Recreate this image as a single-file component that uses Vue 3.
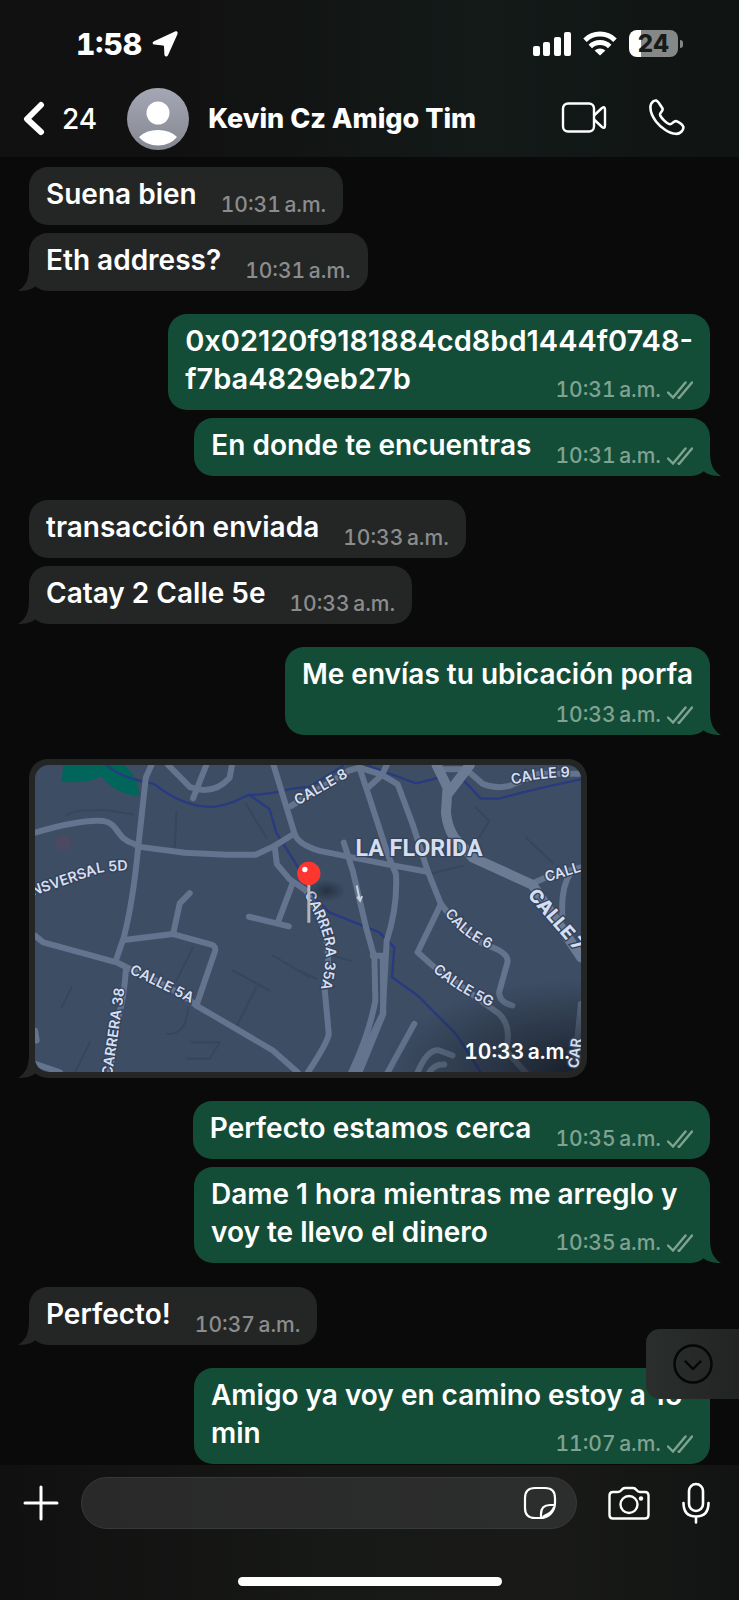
<template>
  <div class="phone">
    <header class="top">
      <div class="status">
        <span class="clock">1:58</span>
        <svg class="arrow" width="26" height="26" viewBox="0 0 26 26" fill="#fff">
          <path d="M23 .6 2 10.2C0 11.200 .3 13.400 2.300 13.600L11 14.400Q12 14.500 12 15.500L12.400 23.500C12.500 25.800 15 26.200 16 24.200L25.300 3.400C26.300 1.200 25 -.2 23 .6Z" />
        </svg>
        <svg class="signal" width="38" height="24" viewBox="0 0 38 24" fill="#fff">
          <rect x="0" y="14" width="7" height="10" rx="2" />
          <rect x="10" y="10" width="7" height="14" rx="2" />
          <rect x="21" y="5" width="7" height="19" rx="2" />
          <rect x="31" y="0" width="7" height="24" rx="2" />
        </svg>
        <svg class="wifi" width="34" height="25" viewBox="0 0 34 25" fill="none" stroke="#fff" stroke-width="5">
          <path d="M2 9.200A21.500 21.500 0 0 1 32 9.200" />
          <path d="M7.300 15.500A14 14 0 0 1 26.700 15.500" />
          <path d="M17 24.500 11.600 19.600A8 8 0 0 1 22.400 19.600Z" fill="#fff" stroke="none" />
        </svg>
        <span class="battery"><span class="level">24</span></span>
      </div>
      <div class="contact">
        <button class="back" aria-label="Atrás">
          <svg width="22" height="36" viewBox="0 0 22 36" fill="none" stroke="#fff" stroke-width="6" stroke-linecap="round" stroke-linejoin="round">
            <path d="M18 4 4 18 18 31" />
          </svg>
          <span>24</span>
        </button>
        <svg class="avatar" width="62" height="62" viewBox="0 0 62 62">
          <defs>
            <linearGradient id="avatarFill" x1="0" y1="0" x2="0" y2="1">
              <stop offset="0" stop-color="#a5a7b4" />
              <stop offset="1" stop-color="#858793" />
            </linearGradient>
          </defs>
          <circle cx="31" cy="31" r="31" fill="url(#avatarFill)" />
          <circle cx="31" cy="25" r="11.500" fill="#fff" />
          <path d="M12 49Q19 42 31 42T50 49Q43 57.500 31 57.500T12 49Z" fill="#fff" />
        </svg>
        <h1>Kevin Cz Amigo Tim</h1>
        <button class="video" aria-label="Videollamada">
          <svg width="46" height="34" viewBox="0 0 46 34" fill="none" stroke="#fff" stroke-width="2.400" stroke-linejoin="round">
            <rect x="2" y="1.500" width="31" height="28" rx="5" />
            <path d="M33 13.500 41 6Q44 4 44 7.500V23.500Q44 27 41 25L33 17.500" />
          </svg>
        </button>
        <button class="call" aria-label="Llamar">
          <svg width="36" height="40" viewBox="0 0 36 40" fill="none" stroke="#fff" stroke-width="2.600" stroke-linejoin="round">
            <path d="M1.500 7C2 3.500 5 .8 7.500 1.600 9.500 2.600 11.500 6.500 13.500 9.500 14.500 12 10.800 13.500 11 15.500 11.500 18.500 18 25 21 25.200 23.500 25.200 24.800 21.300 27.500 22.200 30 23.400 33.500 25.500 34.300 27.800 35 31 31 35.300 26.500 34.800 20.500 34.500 12 29 7 22.500 3 17 1 11.500 1.500 7Z" />
          </svg>
        </button>
      </div>
    </header>

    <main class="chat">
      <div
        v-for="msg in messages"
        :key="msg.id"
        class="bubble"
        :class="[msg.mine ? 'mine' : 'theirs', msg.layout, { first: msg.first, wide: msg.wide }]"
      >
        <template v-if="msg.layout === 'map'">
          <svg class="map-art" viewBox="105 72 1641 924" role="img" aria-label="La Florida">
            <defs>
              <path v-for="label in labels" :id="label.id" :key="label.id" :d="label.d" />
              <radialGradient id="shade" cx="1" cy="1" r="1">
                <stop offset="0" stop-color="#10151c" stop-opacity="0.850" />
                <stop offset="0.400" stop-color="#10151c" stop-opacity="0.450" />
                <stop offset="1" stop-color="#10151c" stop-opacity="0" />
              </radialGradient>
              <radialGradient id="pinShadow">
                <stop offset="0" stop-color="#1d2735" stop-opacity="0.700" />
                <stop offset="1" stop-color="#1d2735" stop-opacity="0" />
              </radialGradient>
            </defs>
            <rect x="105" y="72" width="1641" height="924" fill="#3d4d64" />
            <path d="M190 72H375L410 115 420 166Q345 160 305 105 260 130 185 122Z" fill="#00665c" />
            <circle cx="190" cy="305" r="24" fill="#5b4660" opacity=".5" />
            <path
              class="block"
              d="M200 225Q210 205 320 208L400 220M530 210 525 320M740 190 800 290M580 620 530 720M700 690 810 750M770 740 710 860M500 880Q560 885 565 800M575 905H660L630 955H560M820 645 930 710M215 740 185 800M270 905 225 996M1580 290 1660 365M1430 200 1470 240 1440 290M1290 400 1390 375M900 690 950 715M980 640 1055 660"
            />
            <path v-for="d in rivers" :key="d" class="river" :d="d" />
            <path v-for="d in roads" :key="d" class="road" :d="d" />
            <path v-for="d in avenues" :key="d" class="avenue" :d="d" />
            <path d="M1072 434 1081 478M1073 468 1082 480 1088 466" fill="none" stroke="#c9d2de" stroke-width="6" />
            <rect x="1146" y="716" width="600" height="280" fill="url(#shade)" />
            <text v-for="label in labels" :key="label.id" class="street" :class="{ big: label.big }">
              <textPath :href="'#' + label.id">{{ label.text }}</textPath>
            </text>
            <text class="area" x="1068" y="345">LA FLORIDA</text>
            <ellipse cx="982" cy="450" rx="56" ry="34" fill="url(#pinShadow)" />
            <path d="M928 430V546" stroke="#b5b5b5" stroke-width="9" />
            <circle cx="928" cy="398" r="35" fill="#ff3530" />
            <circle cx="916" cy="386" r="8" fill="#fff" />
          </svg>
          <span class="map-time">{{ msg.time }}</span>
        </template>
        <template v-else>
          <span class="text">{{ msg.text }}</span>
          <span class="meta">
            {{ msg.time }}
            <svg v-if="msg.mine" width="26" height="18" viewBox="0 0 26 18" fill="none" stroke="currentColor" stroke-width="2.400" stroke-linecap="round">
              <path d="M1 11.500 6 16.500 18.500 1.500M11.500 16.500 12 17 25 1.500" />
            </svg>
          </span>
        </template>
        <svg v-if="msg.last" class="tail" width="18" height="24" viewBox="0 0 18 24" fill="currentColor">
          <path d="M11 0C11 12 8 19 0 24 7 24 13 23 18 19V0Z" />
        </svg>
      </div>

      <button class="jump" aria-label="Ir al final">
        <svg width="40" height="40" viewBox="0 0 40 40" fill="none" stroke="#050606" stroke-width="2.400" stroke-linecap="round" stroke-linejoin="round">
          <circle cx="20" cy="20" r="18.500" />
          <path d="M12.500 17.500 20 25 27.500 17.500" />
        </svg>
      </button>
    </main>

    <footer class="bottom">
      <form class="composer" @submit.prevent>
        <button type="button" class="plus" aria-label="Adjuntar">
          <svg width="36" height="36" viewBox="0 0 36 36" stroke="#fff" stroke-width="3" stroke-linecap="round">
            <path d="M18 2V34M2 18H34" />
          </svg>
        </button>
        <div class="field">
          <input v-model="draft" type="text" aria-label="Mensaje" />
          <button type="button" aria-label="Stickers">
            <svg width="34" height="34" viewBox="0 0 34 34" fill="none" stroke="#fff" stroke-width="2.200" stroke-linejoin="round">
              <path d="M12 2H22Q32 2 32 12V17C32 26 25 32 17 32H12Q2 32 2 22V12Q2 2 12 2Z" />
              <path d="M18 32V28Q18 19 27 19H32M20 31Q21 30 25 28 30 25 31 21" />
            </svg>
          </button>
        </div>
        <button type="button" class="camera" aria-label="Cámara">
          <svg width="42" height="34" viewBox="0 0 42 34" fill="none" stroke="#fff" stroke-width="2.400" stroke-linejoin="round">
            <path d="M5 6H10Q12 6 13.500 4T17 2H25Q27 2 28.500 4T32 6H37Q40.500 6 40.500 9.500V29Q40.500 32.500 37 32.500H5Q1.500 32.500 1.500 29V9.500Q1.500 6 5 6Z" />
            <circle cx="21" cy="18.500" r="8.500" />
            <circle cx="33" cy="12.500" r="2.200" fill="#fff" stroke="none" />
          </svg>
        </button>
        <button type="button" class="mic" aria-label="Mensaje de voz">
          <svg width="28" height="42" viewBox="0 0 28 42" fill="none" stroke="#fff" stroke-width="2.600" stroke-linecap="round">
            <rect x="7" y="2" width="14" height="27" rx="7" />
            <path d="M1.500 21Q1.500 34.500 14 34.500T26.500 21M14 34.500V40.500" />
          </svg>
        </button>
      </form>
      <div class="home"></div>
    </footer>
  </div>
</template>


<script setup>
import { ref } from 'vue';

const draft = ref('');

// layout: where the time goes (beside the text, over its last line, below it)
const messages = [
  { id: 1, text: 'Suena bien', time: '10:31\u202fa.m.', layout: 'beside' },
  { id: 2, text: 'Eth address?', time: '10:31\u202fa.m.', layout: 'beside', last: true },
  { id: 3, mine: true, first: true, wide: true, text: '0x02120f9181884cd8bd1444f0748-\nf7ba4829eb27b', time: '10:31\u202fa.m.', layout: 'over' },
  { id: 4, mine: true, text: 'En donde te encuentras', time: '10:31\u202fa.m.', layout: 'beside', last: true },
  { id: 5, first: true, text: 'transacción enviada', time: '10:33\u202fa.m.', layout: 'beside' },
  { id: 6, text: 'Catay 2 Calle 5e', time: '10:33\u202fa.m.', layout: 'beside', last: true },
  { id: 7, mine: true, first: true, text: 'Me envías tu ubicación porfa', time: '10:33\u202fa.m.', layout: 'below', last: true },
  { id: 8, first: true, time: '10:33\u202fa.m.', layout: 'map', last: true },
  { id: 9, mine: true, first: true, text: 'Perfecto estamos cerca', time: '10:35\u202fa.m.', layout: 'beside' },
  { id: 10, mine: true, text: 'Dame 1 hora mientras me arreglo y voy te llevo el dinero', time: '10:35\u202fa.m.', layout: 'over', last: true },
  { id: 11, first: true, text: 'Perfecto!', time: '10:37\u202fa.m.', layout: 'beside', last: true },
  { id: 12, mine: true, first: true, text: 'Amigo ya voy en camino estoy a 15 min', time: '11:07\u202fa.m.', layout: 'over' },
];

const rivers = [
  'M320 72C360 110 420 118 465 130 520 175 580 198 640 198 700 192 720 170 750 162 830 162 850 142 930 138L1030 75',
  'M750 162 810 205 830 275 890 370 950 475 990 515 1140 575 1185 620 1178 710 1255 765 1370 880 1445 996',
  'M1100 72 1250 127 1330 108',
  'M1390 115 1445 173 1500 173Q1600 145 1746 115',
];

const roads = [
  'M105 275C190 250 260 236 310 240 360 250 345 290 400 308L420 318',
  'M455 72 438 110 415 320Q400 480 372 590L348 660',
  'M420 318 555 336 680 342H768L825 315 885 278',
  'M105 585 130 605 350 665 380 680Q530 745 590 795L820 930 895 996',
  'M378 690Q372 780 350 850L330 996',
  'M372 598 520 580 635 612Q652 618 645 635L590 795',
  'M520 580 540 488 570 457',
  'M748 528 868 557M835 545 880 425',
  'M825 315 832 370 870 415 920 450C970 540 1005 620 975 740L988 880Q985 905 925 996',
  'M505 72 570 138Q640 165 690 110L697 72M620 72 580 172',
  'M822 72 885 278Q895 310 960 330L1160 370 1280 392',
  'M875 195 1050 88 1080 80 1145 100 1195 130 1240 250 1285 390 1325 490',
  'M1080 80 1110 170 1165 340 1190 400Q1195 500 1162 600L1150 820 1065 996',
  'M1162 72 1148 102 1108 138',
  'M1033 305 1060 390 1100 560 1125 650 1128 780Q1110 880 1055 996',
  'M1120 645H1158M1150 650 1152 820 1080 996',
  'M1330 85H1400L1450 128Q1490 145 1530 135L1620 98H1746',
  'M1600 428 1640 410 1746 380M1715 395Q1685 440 1690 525',
  'M1325 490 1255 635 1300 675 1500 820Q1540 860 1520 930L1580 996',
  'M1325 490Q1410 600 1480 620 1530 640 1525 665L1500 755Q1500 785 1540 795',
  'M1245 850 1165 996M1255 996Q1285 925 1320 930L1360 945M1290 996Q1305 970 1335 972',
  'M1746 790 1728 960M105 970 180 996M105 870 110 900',
];

const avenues = [
  'M1312 72 1345 140 1340 215Q1345 260 1365 290L1420 350 1600 432 1746 650',
  'M1412 72 1345 160',
];

const labels = [
  { id: 'transversal', text: 'NSVERSAL 5D', d: 'M98 466Q230 420 300 396 340 388 440 388' },
  { id: 'calle5a', text: 'CALLE 5A', d: 'M388 698Q470 735 620 812' },
  { id: 'carrera38', text: 'CARRERA 38', d: 'M336 1010Q358 860 380 700' },
  { id: 'calle8', text: 'CALLE 8', d: 'M895 194 1090 82' },
  { id: 'calle9', text: 'CALLE 9', d: 'M1540 132Q1620 106 1746 108' },
  { id: 'carrera35a', text: 'CARRERA 35A', d: 'M914 460Q970 560 978 620 984 680 950 800' },
  { id: 'calle6', text: 'CALLE 6', d: 'M1336 518Q1400 610 1520 640' },
  { id: 'calle5g', text: 'CALLE 5G', d: 'M1300 690Q1390 770 1530 822' },
  { id: 'call', text: 'CALL', d: 'M1642 424 1780 382' },
  { id: 'calle7', text: 'CALLE 7', big: true, d: 'M1584 464 1800 713' },
  { id: 'car', text: 'CAR', d: 'M1738 984 1752 850' },
];
</script>


<style>
body {
  margin: 0;
  background: #0a0a0a;
}
</style>

<style scoped>
.phone {
  display: flex;
  flex-direction: column;
  min-height: 100vh;
  color: #fff;
  font-family: Inter, "Liberation Sans", sans-serif;
  font-size: 28px;
}
button {
  display: flex;
  align-items: center;
  padding: 0;
  border: 0;
  background: none;
  color: inherit;
  font: inherit;
  cursor: pointer;
}
svg {
  display: block;
  flex-shrink: 0;
}

.top {
  padding-bottom: 7px;
  background: linear-gradient(90deg, #111 25%, #131a18 65%, #101413);
}
.status {
  display: flex;
  align-items: center;
  height: 87px;
  padding: 0 56px 0 76px;
}
.clock {
  font-size: 30px;
  font-weight: 800;
  font-variant-numeric: tabular-nums;
}
.arrow {
  margin-left: 10px;
}
.signal {
  margin-left: auto;
}
.wifi {
  margin: 0 12px;
}
.battery {
  display: flex;
  align-items: center;
  gap: 2px;
}
.battery::after {
  content: '';
  width: 3px;
  height: 8px;
  border-radius: 0 4px 4px 0;
  background: #858887;
}
.level {
  width: 49px;
  height: 27px;
  border-radius: 8px;
  background: linear-gradient(90deg, #fff 24%, #858887 24%);
  color: #151b19;
  font-size: 24px;
  font-weight: 800;
  line-height: 27px;
  text-align: center;
}
.contact {
  display: flex;
  align-items: center;
  height: 63px;
  padding: 0 54px 0 23px;
}
.back {
  gap: 17px;
  font-weight: 500;
}
.avatar {
  margin: 0 19px 0 30px;
}
h1 {
  flex: 1;
  margin: 0;
  font-size: 27px;
  font-weight: 800;
}
.call {
  margin-left: 42px;
}

.chat {
  position: relative;
  display: flex;
  flex: 1;
  flex-direction: column;
  align-items: flex-start;
  gap: 8px;
  padding: 10px 29px 1px;
}
.bubble {
  position: relative;
  display: grid;
  box-sizing: border-box;
  padding: 8px 17px;
  border-radius: 19px;
}
.theirs {
  background: #242626;
}
.mine {
  align-self: flex-end;
  background: #144d37;
}
.first {
  margin-top: 15px;
}
.theirs.first {
  margin-top: 16px;
}
.text {
  margin-bottom: 4px;
  font-weight: 600;
  line-height: 38px;
  white-space: pre-line;
}
.meta {
  display: flex;
  align-items: center;
  gap: 6px;
  color: #8b8d8d;
  font-size: 21px;
  font-weight: 500;
  font-variant-numeric: tabular-nums;
  line-height: 24px;
  white-space: nowrap;
}
.mine .meta {
  color: #7fa393;
}
.beside {
  grid-auto-flow: column;
  align-items: end;
  column-gap: 24px;
}
.over {
  max-width: 516px;
}
.wide {
  max-width: none;
}
.wide .text {
  font-size: 29px;
}
.over .text,
.over .meta {
  grid-area: 1 / 1;
}
.over .meta {
  align-self: end;
  justify-self: end;
}
.below {
  row-gap: 6px;
}
.below .meta {
  justify-self: end;
}
.tail {
  position: absolute;
  bottom: 0;
  left: -11px;
  color: #242626;
}
.mine .tail {
  right: -11px;
  left: auto;
  color: #144d37;
  transform: scaleX(-1);
}

.map {
  width: 82%;
  max-width: 558px;
  padding: 6px;
}
.map-art {
  position: relative;
  z-index: 1;
  width: 100%;
  border-radius: 14px;
}
.map-time {
  position: absolute;
  z-index: 2;
  right: 17px;
  bottom: 14px;
  font-size: 21px;
  font-weight: 600;
  font-variant-numeric: tabular-nums;
  line-height: 24px;
}
.block,
.river,
.road,
.avenue {
  fill: none;
  stroke-linecap: round;
  stroke-linejoin: round;
}
.block {
  stroke: #38465c;
  stroke-width: 6;
}
.river {
  stroke: #283a80;
  stroke-width: 7;
}
.road {
  stroke: #64748e;
  stroke-width: 18;
}
.avenue {
  stroke: #6c7b94;
  stroke-width: 30;
}
.street,
.area {
  fill: #d5def0;
  stroke: #34435a;
  stroke-width: 8;
  paint-order: stroke;
}
.street {
  font-size: 43px;
  font-weight: 600;
}
.big {
  font-size: 56px;
  font-weight: 800;
}
.area {
  font-family: "Liberation Sans Narrow", Roboto, sans-serif;
  font-size: 70px;
  font-weight: 700;
}

.jump {
  position: absolute;
  right: 0;
  bottom: 66px;
  padding: 15px 26px 15px 27px;
  border-radius: 14px 0 0 14px;
  background: linear-gradient(90deg, #2a2f2d, #222423);
}

.bottom {
  padding: 12px 0 14px;
  background: linear-gradient(90deg, #101010, #171916 45%, #191a17 75%, #111413);
}
.composer {
  display: flex;
  align-items: center;
  padding: 0 29px 0 23px;
}
.field {
  display: flex;
  flex: 1;
  align-items: center;
  box-sizing: border-box;
  min-width: 0;
  height: 52px;
  margin: 0 31px 0 22px;
  padding: 0 19px 0 24px;
  border: 1px solid #373939;
  border-radius: 26px;
  background: linear-gradient(90deg, #292929, #2c2e2d);
}
input {
  flex: 1;
  min-width: 0;
  padding: 0;
  border: 0;
  outline: 0;
  background: none;
  color: inherit;
  font: inherit;
}
.mic {
  margin-left: 32px;
}
.home {
  width: 264px;
  height: 9px;
  margin: 48px auto 0;
  border-radius: 5px;
  background: #fff;
}
</style>
